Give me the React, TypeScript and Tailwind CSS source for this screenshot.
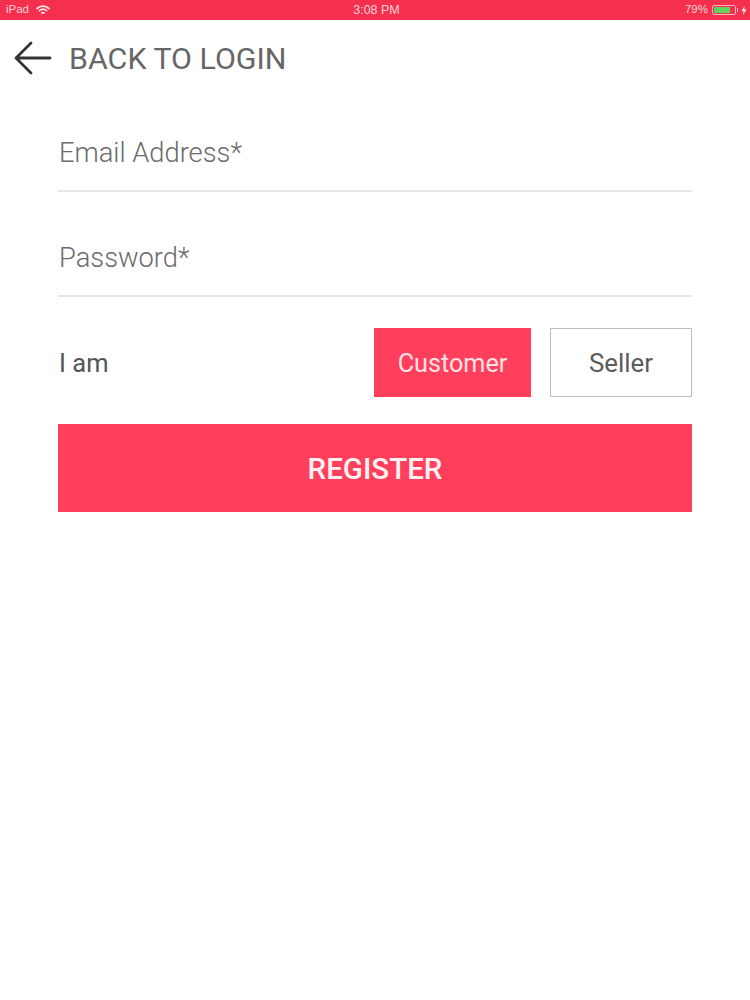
const StatusBar = () => (
  <div className="flex h-5 items-center justify-between bg-[#f5304f] pl-[6px] pr-[3px] text-[11.5px] text-[#fbd0d6] font-['Liberation_Sans',sans-serif]">
    <div className="flex w-[120px] items-center gap-[7px]">
      <span>iPad</span>
      <svg width="14" height="10" viewBox="0 0 14 10" fill="none" stroke="#fde3e6" strokeWidth="1.7" strokeLinecap="round">
        <path d="M1 3.5C4.5.4 9.5.4 13 3.5" />
        <path d="M3.4 5.7c2.2-1.8 5-1.8 7.2 0" />
        <path d="M6 8c.6-.5 1.4-.5 2 0" />
      </svg>
    </div>
    <span className="text-[12.5px]">3:08 PM</span>
    <div className="flex w-[120px] items-center justify-end">
      <span className="mr-[4px]">79%</span>
      <div className="flex h-[10px] w-[24px] items-center rounded-[2px] border border-[#fbb4bd] p-px">
        <div className="h-full w-[16px] bg-[#63d15f]" />
      </div>
      <div className="ml-px h-1 w-px bg-[#fbb4bd]" />
      <svg className="ml-[3px]" width="6" height="9" viewBox="0 0 6 9" fill="#fde3e6">
        <path d="M3.6 0 .4 5h2L2 9l3.6-5.4H3.4z" />
      </svg>
    </div>
  </div>
);

const Field = ({ label }: { label: string }) => (
  <div className="flex h-[63px] items-start border-b-2 border-[#e6e6e6] pt-[6px] pl-px text-[27.3px] leading-[36px] font-light text-[#6b6b6b]">
    {label}
  </div>
);

const App = () => {
  return (
    <div className="h-[1000px] w-[750px] bg-white font-['Roboto',sans-serif]">
      <StatusBar />
      <div className="flex h-[77px] items-center pl-[14px] pb-[1px]">
        <svg width="38" height="34" viewBox="0 0 38 34" fill="none" stroke="#333333" strokeWidth="2.8" strokeLinecap="round" strokeLinejoin="round">
          <path d="M36 17H2M17 2 2 17l15 15" />
        </svg>
        <span className="ml-[17px] pt-[1px] text-[30.4px] text-[#666666]">BACK TO LOGIN</span>
      </div>
      <div className="px-[58px] pt-[32px]">
        <Field label="Email Address*" />
        <div className="mt-[42px]">
          <Field label="Password*" />
        </div>
        <div className="mt-[31px] flex items-center">
          <span className="flex-1 pl-px pt-[2px] text-[25.5px] text-[#555555]">I am</span>
          <div className="flex h-[69px] w-[157px] items-center justify-center bg-[#ff3f5c] pt-[2px] text-[25.2px] text-[#ffe0e4]">
            Customer
          </div>
          <div className="ml-[19px] flex h-[69px] w-[142px] items-center justify-center border border-[#bdbdbd] pt-[2px] text-[25.8px] text-[#5c5c5c]">
            Seller
          </div>
        </div>
        <div className="mt-[27px] flex h-[88px] items-center justify-center bg-[#ff3f5c] pt-[2px] text-[29.5px] font-medium text-[#fff0f2]">
          REGISTER
        </div>
      </div>
    </div>
  );
};

export default App;
